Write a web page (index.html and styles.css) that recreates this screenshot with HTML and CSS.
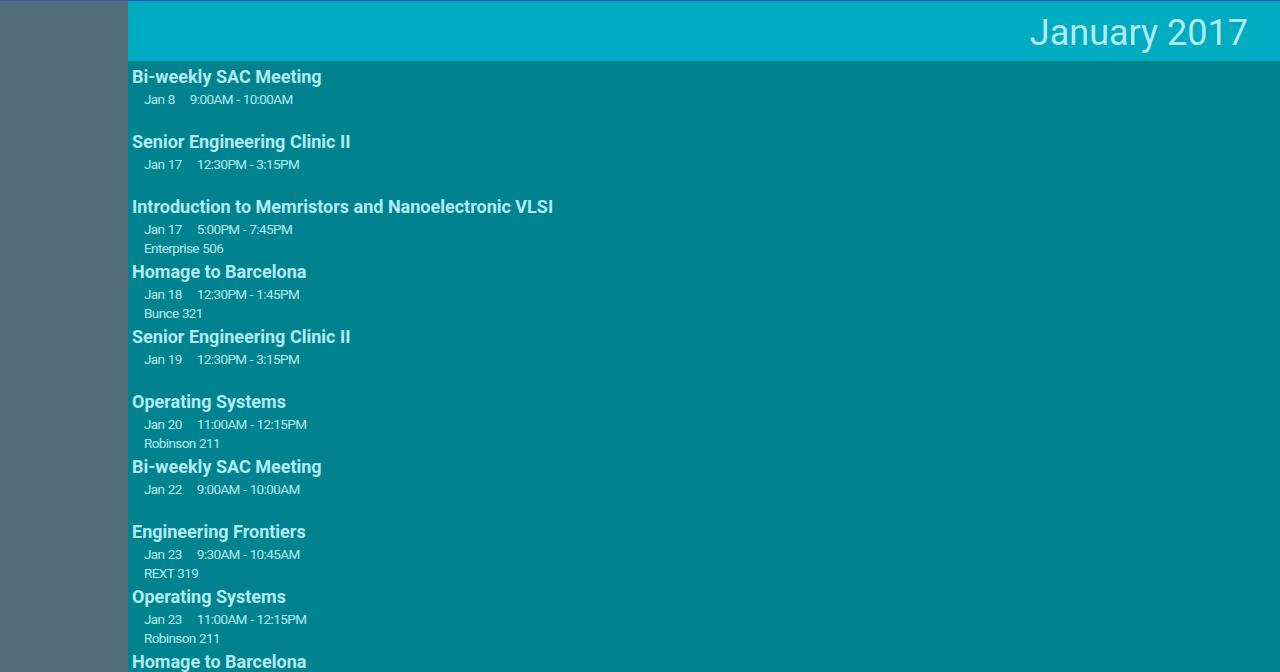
FILE: index.html
```html
<!DOCTYPE html>
<html>
<head>
<meta charset="utf-8">
<link rel="stylesheet" href="styles.css">
</head>
<body>
<div class="app">
  <aside class="sidebar"></aside>
  <main class="main">
    <header class="header"><h1 class="month">January 2017</h1></header>
    <ul class="events">
      <li class="event"><div class="title">Bi-weekly SAC Meeting</div><div class="when"><span class="date">Jan 8</span><span>9:00AM - 10:00AM</span></div><div class="where"></div></li>
      <li class="event"><div class="title">Senior Engineering Clinic II</div><div class="when"><span class="date">Jan 17</span><span>12:30PM - 3:15PM</span></div><div class="where"></div></li>
      <li class="event"><div class="title">Introduction to Memristors and Nanoelectronic VLSI</div><div class="when"><span class="date">Jan 17</span><span>5:00PM - 7:45PM</span></div><div class="where">Enterprise 506</div></li>
      <li class="event"><div class="title">Homage to Barcelona</div><div class="when"><span class="date">Jan 18</span><span>12:30PM - 1:45PM</span></div><div class="where">Bunce 321</div></li>
      <li class="event"><div class="title">Senior Engineering Clinic II</div><div class="when"><span class="date">Jan 19</span><span>12:30PM - 3:15PM</span></div><div class="where"></div></li>
      <li class="event"><div class="title">Operating Systems</div><div class="when"><span class="date">Jan 20</span><span>11:00AM - 12:15PM</span></div><div class="where">Robinson 211</div></li>
      <li class="event"><div class="title">Bi-weekly SAC Meeting</div><div class="when"><span class="date">Jan 22</span><span>9:00AM - 10:00AM</span></div><div class="where"></div></li>
      <li class="event"><div class="title">Engineering Frontiers</div><div class="when"><span class="date">Jan 23</span><span>9:30AM - 10:45AM</span></div><div class="where">REXT 319</div></li>
      <li class="event"><div class="title">Operating Systems</div><div class="when"><span class="date">Jan 23</span><span>11:00AM - 12:15PM</span></div><div class="where">Robinson 211</div></li>
      <li class="event"><div class="title">Homage to Barcelona</div><div class="when"><span class="date">Jan 24</span><span>12:30PM - 1:45PM</span></div><div class="where">Bunce 321</div></li>
    </ul>
  </main>
</div>
</body>
</html>
```
FILE: styles.css
```css
html, body {
  margin: 0;
  padding: 0;
  height: 100%;
  overflow: hidden;
}
body {
  font-family: Roboto, "Liberation Sans", sans-serif;
  border-top: 1px solid #3f51b5;
  box-sizing: border-box;
  background: #00838f;
}
.app {
  display: flex;
  height: 100%;
}
.sidebar {
  width: 128px;
  flex: none;
  background: #546e7a;
}
.main {
  flex: 1;
  background: #00838f;
  color: #b2ebf2;
  overflow: hidden;
}
.header {
  height: 60px;
  box-sizing: border-box;
  padding-top: 4px;
  background: #00acc1;
  display: flex;
  align-items: center;
  justify-content: flex-end;
  padding-right: 32px;
}
.month {
  margin: 0;
  font-size: 36px;
  font-weight: 400;
  color: #b2ebf2;
  line-height: 1;
}
.events {
  list-style: none;
  margin: 0;
  padding: 0 0 0 4px;
}
.event {
  height: 65px;
}
.title {
  font-size: 18px;
  font-weight: 700;
  line-height: 24px;
  padding-top: 4px;
}
.when, .where {
  font-size: 13.5px;
  line-height: 19px;
  height: 19px;
  padding-top: 1px;
  margin-bottom: -1px;
  padding-left: 12px;
  letter-spacing: -0.6px;
  word-spacing: 0.6px;
}
.date {
  margin-right: 15px;
}
```
